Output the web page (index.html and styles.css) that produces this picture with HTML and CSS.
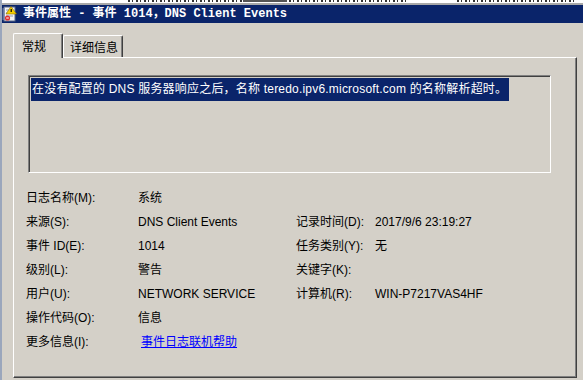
FILE: index.html
```html
<!DOCTYPE html>
<html lang="zh">
<head>
<meta charset="utf-8">
<title>事件属性</title>
<link rel="stylesheet" href="styles.css">
</head>
<body>
<div class="screen">
  <div class="topstrip"><div class="frag f1"></div><div class="frag f2"></div><div class="frag f3"></div><div class="frag f4"></div></div>
  <div class="titlebar">
    <svg class="appicon" width="15" height="16" viewBox="0 0 15 16">
      <rect x="2" y="1" width="11" height="14" fill="#f4f4f4" stroke="#5a6a8a" stroke-width="1"/>
      <line x1="4" y1="4" x2="11" y2="4" stroke="#8898b8"/>
      <line x1="4" y1="7" x2="11" y2="7" stroke="#8898b8"/>
      <line x1="4" y1="10" x2="11" y2="10" stroke="#8898b8"/>
      <rect x="0.5" y="2" width="2" height="12" fill="#6878a0"/>
      <path d="M9 0.5 L14.5 8 L4 8 Z" fill="#f5d000" stroke="#8a6a00" stroke-width="0.6"/>
      <rect x="8.6" y="3" width="1.2" height="3" fill="#000"/>
      <circle cx="5.5" cy="12" r="2.6" fill="#e03030"/>
      <rect x="4.2" y="11.5" width="2.6" height="1" fill="#fff"/>
    </svg>
    <span class="title">事件属性 - 事件 1014，DNS Client Events</span>
  </div>
  <div class="body">
    <div class="tabs">
      <div class="tab active">常规</div>
      <div class="tab">详细信息</div>
    </div>
    <div class="panel">
      <div class="msgbox"><span class="sel">在没有配置的 DNS 服务器响应之后，名称 teredo.ipv6.microsoft.com 的名称解析超时。</span></div>
      <div class="props">
        <div class="lbl">日志名称(M):</div><div class="val">系统</div><div></div><div></div>
        <div class="lbl">来源(S):</div><div class="val">DNS Client Events</div><div class="lbl">记录时间(D):</div><div class="val">2017/9/6 23:19:27</div>
        <div class="lbl">事件 ID(E):</div><div class="val">1014</div><div class="lbl">任务类别(Y):</div><div class="val">无</div>
        <div class="lbl">级别(L):</div><div class="val">警告</div><div class="lbl">关键字(K):</div><div class="val"></div>
        <div class="lbl">用户(U):</div><div class="val">NETWORK SERVICE</div><div class="lbl">计算机(R):</div><div class="val">WIN-P7217VAS4HF</div>
        <div class="lbl">操作代码(O):</div><div class="val">信息</div><div></div><div></div>
        <div class="lbl">更多信息(I):</div><div class="val"><a class="link" href="#">事件日志联机帮助</a></div><div></div><div></div>
      </div>
    </div>
  </div>
</div>
</body>
</html>
```
FILE: styles.css
```css
html, body {
  margin: 0;
  padding: 0;
}
body {
  background: #d4d0c8;
  font-family: "Liberation Sans", "Noto Sans CJK SC", sans-serif;
  font-size: 12px;
  color: #000;
}
.screen {
  width: 583px;
  height: 380px;
  overflow: hidden;
  border-left: 2px solid #9aa6bc;
  box-sizing: border-box;
}
.topstrip {
  height: 5px;
  background: #fff;
  border-bottom: 2px solid #a8a8a8;
  box-sizing: border-box;
  display: flex;
  align-items: flex-start;
}
.frag {
  height: 2px;
  background: repeating-linear-gradient(90deg, #333 0 2px, transparent 2px 4px, #333 4px 5px, transparent 5px 8px);
}
.f1 { margin-left: 126px; width: 115px; }
.f2 { width: 44px; background: #555; }
.f3 { margin-left: 2px; width: 118px; }
.f4 { margin-left: 50px; width: 120px; }
.titlebar {
  height: 18px;
  background: #0a246a;
  display: flex;
  align-items: center;
  padding-left: 2px;
  gap: 6px;
  margin-left: -2px;
}
.appicon {
  flex: none;
}
.title {
  color: #fff;
  font-weight: bold;
  font-family: "Liberation Mono", "Noto Sans CJK SC", monospace;
  font-size: 12px;
  white-space: nowrap;
  line-height: 18px;
}
.body {
  padding-left: 11px;
}
.tabs {
  display: flex;
  align-items: flex-end;
  height: 24px;
  margin-top: 10px;
  position: relative;
  z-index: 1;
}
.tab {
  box-sizing: border-box;
  height: 22px;
  width: 60px;
  background: #d4d0c8;
  border-top: 1px solid #fff;
  border-left: 1px solid #fff;
  border-right: 1px solid #404040;
  box-shadow: inset -1px 0 0 #808080;
  border-radius: 2px 2px 0 0;
  padding-left: 6px;
  line-height: 22px;
  font-family: "Noto Sans CJK SC", sans-serif;
  font-size: 12px;
}
.tab.active {
  width: 50px;
  height: 25px;
  margin-bottom: -1px;
  padding-left: 8px;
  line-height: 23px;
}
.panel {
  box-sizing: border-box;
  width: 564px;
  height: 321px;
  border-top: 1px solid #fff;
  border-left: 1px solid #fff;
  border-right: 1px solid #404040;
  border-bottom: 1px solid #404040;
  box-shadow: inset -1px -1px 0 #808080;
  padding: 17px 0 0 14px;
}
.msgbox {
  box-sizing: border-box;
  width: 523px;
  height: 98px;
  border-top: 1px solid #808080;
  border-left: 1px solid #808080;
  border-right: 1px solid #fff;
  border-bottom: 1px solid #fff;
  box-shadow: inset 1px 1px 0 #404040;
  padding: 2px 0 0 2px;
}
.sel {
  display: inline-block;
  background: #0a246a;
  color: #fff;
  height: 23px;
  line-height: 23px;
  padding: 0 2px 0 1px;
  white-space: nowrap;
  letter-spacing: 0.2px;
}
.props {
  display: grid;
  grid-template-columns: 112px 158px 79px 1fr;
  grid-auto-rows: 24px;
  align-items: center;
  margin-top: 13px;
  margin-left: -2px;
}
.lbl, .val {
  white-space: nowrap;
  line-height: 24px;
}
.link {
  color: #0000ff;
  text-decoration: underline;
  margin-left: 3px;
}
```
